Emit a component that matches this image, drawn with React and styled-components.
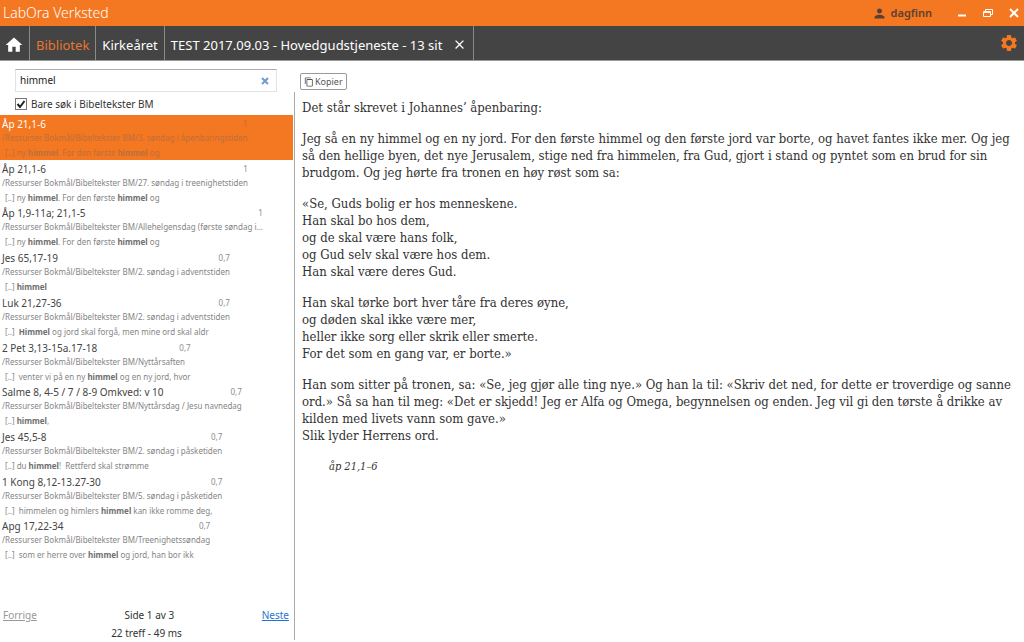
import React, { useState } from "react";
import styled, { createGlobalStyle } from "styled-components";
import {
	MdHome,
	MdSettings,
	MdPerson,
	MdContentCopy,
	MdClose,
} from "react-icons/md";

const results = [
	{
		title: "Åp 21,1-6",
		score: "1",
		path: "3. søndag i åpenbaringstiden",
		text: ["ny ", "himmel", ". For den første ", "himmel", " og"],
	},
	{
		title: "Åp 21,1-6",
		score: "1",
		path: "27. søndag i treenighetstiden",
		text: ["ny ", "himmel", ". For den første ", "himmel", " og"],
	},
	{
		title: "Åp 1,9-11a; 21,1-5",
		score: "1",
		path: "Allehelgensdag (første søndag i...",
		text: ["ny ", "himmel", ". For den første ", "himmel", " og"],
	},
	{
		title: "Jes 65,17-19",
		score: "0,7",
		path: "2. søndag i adventstiden",
		text: ["", "himmel"],
	},
	{
		title: "Luk 21,27-36",
		score: "0,7",
		path: "2. søndag i adventstiden",
		text: [" ", "Himmel", " og jord skal forgå, men mine ord skal aldr"],
	},
	{
		title: "2 Pet 3,13-15a.17-18",
		score: "0,7",
		path: "Nyttårsaften",
		text: [" venter vi på en ny ", "himmel", " og en ny jord, hvor"],
	},
	{
		title: "Salme 8, 4-5 / 7 / 8-9 Omkved: v 10",
		score: "0,7",
		path: "Nyttårsdag / Jesu navnedag",
		text: ["", "himmel", ","],
	},
	{
		title: "Jes 45,5-8",
		score: "0,7",
		path: "2. søndag i påsketiden",
		text: ["du ", "himmel", "!  Rettferd skal strømme"],
	},
	{
		title: "1 Kong 8,12-13.27-30",
		score: "0,7",
		path: "5. søndag i påsketiden",
		text: [" himmelen og himlers ", "himmel", " kan ikke romme deg,"],
	},
	{
		title: "Apg 17,22-34",
		score: "0,7",
		path: "Treenighetssøndag",
		text: [" som er herre over ", "himmel", " og jord, han bor ikk"],
	},
];

export default function App() {
	const [query, setQuery] = useState("himmel");
	const [onlyBible, setOnlyBible] = useState(true);
	const [selected, setSelected] = useState(0);

	return (
		<Window>
			<GlobalStyle />
			<TitleBar>
				<AppName>LabOra Verksted</AppName>
				<User>
					<MdPerson size={15} />
					dagfinn
				</User>
				<WindowButtons>
					<WindowButton aria-label="Minimer">
						<svg width="10" height="10" viewBox="0 0 10 10">
							<path d="M1 7.5h8" stroke="#fff" strokeWidth="2" />
						</svg>
					</WindowButton>
					<WindowButton aria-label="Gjenopprett">
						<svg width="10" height="10" viewBox="0 0 10 10">
							<path d="M2.5 3.5v-2h7v5h-2" stroke="#fff" fill="none" />
							<path d="M0.5 3.5h7v5h-7z" stroke="#fff" fill="none" />
							<path d="M0.5 4.5h7" stroke="#fff" />
						</svg>
					</WindowButton>
					<WindowButton aria-label="Lukk">
						<svg width="10" height="10" viewBox="0 0 10 10">
							<path
								d="M1 1l8 8M9 1L1 9"
								stroke="#fff"
								strokeWidth="2"
							/>
						</svg>
					</WindowButton>
				</WindowButtons>
			</TitleBar>
			<NavBar>
				<HomeTab aria-label="Hjem">
					<MdHome size={20} />
				</HomeTab>
				<NavTab $active>Bibliotek</NavTab>
				<NavTab>Kirkeåret</NavTab>
				<OpenTab>
					<NavTab>TEST 2017.09.03 - Hovedgudstjeneste - 13 sit</NavTab>
					<CloseTab aria-label="Lukk fane">
						<MdClose size={15} />
					</CloseTab>
				</OpenTab>
				<Settings aria-label="Innstillinger">
					<MdSettings size={20} />
				</Settings>
			</NavBar>
			<Main>
				<Sidebar>
					<SearchArea>
						<SearchBox>
							<SearchInput
								aria-label="Søk"
								value={query}
								onChange={(e) => setQuery(e.target.value)}
							/>
							<ClearButton
								aria-label="Tøm"
								onClick={() => setQuery("")}
							>
								<svg width="8" height="8" viewBox="0 0 8 8">
									<path
										d="M1 1l6 6M7 1L1 7"
										stroke="#6f9cc8"
										strokeWidth="2"
									/>
								</svg>
							</ClearButton>
						</SearchBox>
						<CheckLabel>
							<CheckBox
								type="checkbox"
								checked={onlyBible}
								onChange={(e) => setOnlyBible(e.target.checked)}
							/>
							Bare søk i Bibeltekster BM
						</CheckLabel>
					</SearchArea>
					<ResultList>
						{results.map((item, i) => (
							<Result key={i}>
								<ResultButton
									$selected={i === selected}
									onClick={() => setSelected(i)}
								>
									<ResultHead>
										<ResultTitle>{item.title}</ResultTitle>
										<Score>{item.score}</Score>
									</ResultHead>
									<Path>
										/Ressurser Bokmål/Bibeltekster BM/
										{item.path}
									</Path>
									<Snippet>
										{"[..] "}
										{item.text.map((part, j) =>
											j % 2 ? <b key={j}>{part}</b> : part
										)}
									</Snippet>
								</ResultButton>
							</Result>
						))}
					</ResultList>
					<Pager>
						<PageLink href="#forrige" $disabled>
							Forrige
						</PageLink>
						<span>Side 1 av 3</span>
						<PageLink href="#neste">Neste</PageLink>
					</Pager>
					<Hits>22 treff - 49 ms</Hits>
				</Sidebar>
				<Reader>
					<CopyButton>
						<MdContentCopy size={10} />
						Kopier
					</CopyButton>
					<Article>
						<p>Det står skrevet i Johannes’ åpenbaring:</p>
						<p>
							Jeg så en ny himmel og en ny jord. For den første himmel
							og den første jord var borte, og havet fantes ikke mer.
							Og jeg så den hellige byen, det nye Jerusalem, stige ned
							fra himmelen, fra Gud, gjort i stand og pyntet som en
							brud for sin brudgom. Og jeg hørte fra tronen en høy røst
							som sa:
						</p>
						<p>
							«Se, Guds bolig er hos menneskene.
							<br />
							Han skal bo hos dem,
							<br />
							og de skal være hans folk,
							<br />
							og Gud selv skal være hos dem.
							<br />
							Han skal være deres Gud.
						</p>
						<p>
							Han skal tørke bort hver tåre fra deres øyne,
							<br />
							og døden skal ikke være mer,
							<br />
							heller ikke sorg eller skrik eller smerte.
							<br />
							For det som en gang var, er borte.»
						</p>
						<p>
							Han som sitter på tronen, sa: «Se, jeg gjør alle ting
							nye.» Og han la til: «Skriv det ned, for dette er
							troverdige og sanne ord.» Så sa han til meg: «Det er
							skjedd! Jeg er Alfa og Omega, begynnelsen og enden. Jeg
							vil gi den tørste å drikke av kilden med livets vann som
							gave.»
							<br />
							Slik lyder Herrens ord.
						</p>
						<Source>åp 21,1–6</Source>
					</Article>
				</Reader>
			</Main>
		</Window>
	);
}

const GlobalStyle = createGlobalStyle`
	* {
		box-sizing: border-box;
	}

	body {
		margin: 0;
		background: #fff;
		font-family: "Noto Sans", "Open Sans", sans-serif;
		color: #333;
	}

	button {
		border: 0;
		padding: 0;
		background: none;
		font: inherit;
		color: inherit;
		cursor: pointer;
	}
`;

const Window = styled.div`
	display: flex;
	flex-direction: column;
	min-height: 100vh;
`;

const TitleBar = styled.header`
	display: flex;
	align-items: center;
	height: 26px;
	padding: 0 5px 0 3px;
	background: #f47721;
`;

const AppName = styled.h1`
	flex: 1;
	margin: 0;
	font-size: 14px;
	line-height: 20px;
	font-weight: 300;
	color: #fff;
`;

const User = styled.div`
	display: flex;
	align-items: center;
	gap: 4px;
	margin-right: 25px;
	font-size: 11px;
	line-height: 14px;
	font-weight: 600;
	color: #5a4034;
`;

const WindowButtons = styled.div`
	display: flex;
	gap: 16px;
`;

const WindowButton = styled.button`
	display: flex;
`;

const NavBar = styled.nav`
	display: flex;
	height: 35px;
	background: #444;
	border-bottom: 1px solid #999;
`;

const NavTab = styled.button`
	display: flex;
	align-items: center;
	padding: 4px 6px 0;
	border-right: 1px solid #8a8a8a;
	font-size: 13px;
	white-space: nowrap;
	color: ${({ $active }) => ($active ? "#e8762c" : "#fff")};
`;

const HomeTab = styled(NavTab)`
	padding: 3px 5px 0 4px;
`;

const OpenTab = styled.div`
	display: flex;
	border-right: 1px solid #8a8a8a;

	${NavTab} {
		border-right: 0;
	}
`;

const CloseTab = styled.button`
	display: flex;
	align-items: center;
	padding: 3px 6px 0 4px;
	color: #fff;
`;

const Settings = styled.button`
	display: flex;
	align-items: center;
	margin-left: auto;
	padding-right: 5px;
	color: #f47721;
`;

const Main = styled.main`
	flex: 1;
	display: grid;
	grid-template-columns: 294px minmax(0, 1fr);
`;

const Sidebar = styled.section`
	display: flex;
	flex-direction: column;
	padding-right: 1px;
`;

const SearchArea = styled.div`
	padding: 8px 16px 4px 15px;
`;

const SearchBox = styled.div`
	display: flex;
	align-items: center;
	height: 23px;
	border: 1px solid #e2e3ea;
	border-top-color: #abadb3;
`;

const SearchInput = styled.input`
	flex: 1;
	min-width: 0;
	border: 0;
	padding: 0 4px 2px;
	outline: 0;
	font: inherit;
	font-size: 10px;
	color: #222;
`;

const ClearButton = styled.button`
	display: flex;
	padding: 0 7px;
`;

const CheckLabel = styled.label`
	display: flex;
	align-items: center;
	gap: 4px;
	margin-top: 5px;
	font-size: 10px;
	line-height: 14px;
`;

const CheckBox = styled.input`
	appearance: none;
	width: 12px;
	height: 12px;
	margin: 0;
	border: 1px solid #777;

	&:checked {
		background: url("data:image/svg+xml,%3Csvg xmlns='http://www.w3.org/2000/svg' viewBox='0 0 10 10'%3E%3Cpath d='M1.5 5l2.5 3L8.5 2' fill='none' stroke='%23222' stroke-width='2'/%3E%3C/svg%3E");
	}
`;

const ResultList = styled.ul`
	flex: 1;
	display: grid;
	grid-auto-rows: 1fr;
	margin: 0;
	padding: 0;
	list-style: none;
`;

const Result = styled.li`
	display: grid;
`;

const Score = styled.span`
	font-size: 8px;
	line-height: 15px;
	color: #8c8c8c;
`;

const ResultTitle = styled.span`
	font-size: 10px;
	color: #444;
`;

const Path = styled.span`
	font-size: 8px;
	line-height: 12px;
	color: #858585;
`;

const Snippet = styled.span`
	padding: 3px 0 0 3px;
	font-size: 8px;
	line-height: 12px;
	white-space: pre;
	color: #858585;

	b {
		color: #707070;
	}
`;

/* the text column is as wide as its longest line, so the score ends there */
const ResultButton = styled.button`
	display: grid;
	grid-template-columns: max-content;
	align-content: start;
	padding: 1px 24px 0 2px;
	text-align: left;
	white-space: nowrap;
	background: ${({ $selected }) => ($selected ? "#f47721" : "transparent")};

	${ResultTitle} {
		color: ${({ $selected }) => ($selected ? "#fff" : "#444")};
	}

	${Score}, ${Path}, ${Snippet}, ${Snippet} b {
		color: ${({ $selected }) => $selected && "#bd6f3d"};
	}
`;

const ResultHead = styled.span`
	display: flex;
	justify-content: space-between;
	line-height: 16px;
`;

const Pager = styled.footer`
	display: flex;
	justify-content: space-between;
	padding: 44px 4px 0 3px;
	font-size: 10px;
	line-height: 18px;
`;

const PageLink = styled.a`
	color: ${({ $disabled }) => ($disabled ? "#999" : "#1f74d2")};
`;

const Hits = styled.div`
	font-size: 10px;
	line-height: 18px;
	text-align: center;
`;

const Reader = styled.section`
	display: flex;
	flex-direction: column;
	align-items: start;
	padding: 12px 0 2px;
`;

const CopyButton = styled.button`
	display: flex;
	align-items: center;
	gap: 1px;
	height: 17px;
	margin: 0 0 2px 6px;
	padding: 0 3px;
	border: 1px solid #999;
	border-radius: 2px;
	font-size: 9px;
	color: #555;
`;

const Article = styled.article`
	flex: 1;
	align-self: stretch;
	padding: 7px 8px 0 7px;
	border-left: 1px solid #aaa;
	font-family: "DejaVu Serif Condensed", "Liberation Serif", serif;
	font-size: 13px;
	line-height: 17px;

	p {
		margin: 0 0 14px;
	}
`;

const Source = styled.footer`
	padding-left: 27px;
	font-size: 11px;
	font-style: italic;
`;
